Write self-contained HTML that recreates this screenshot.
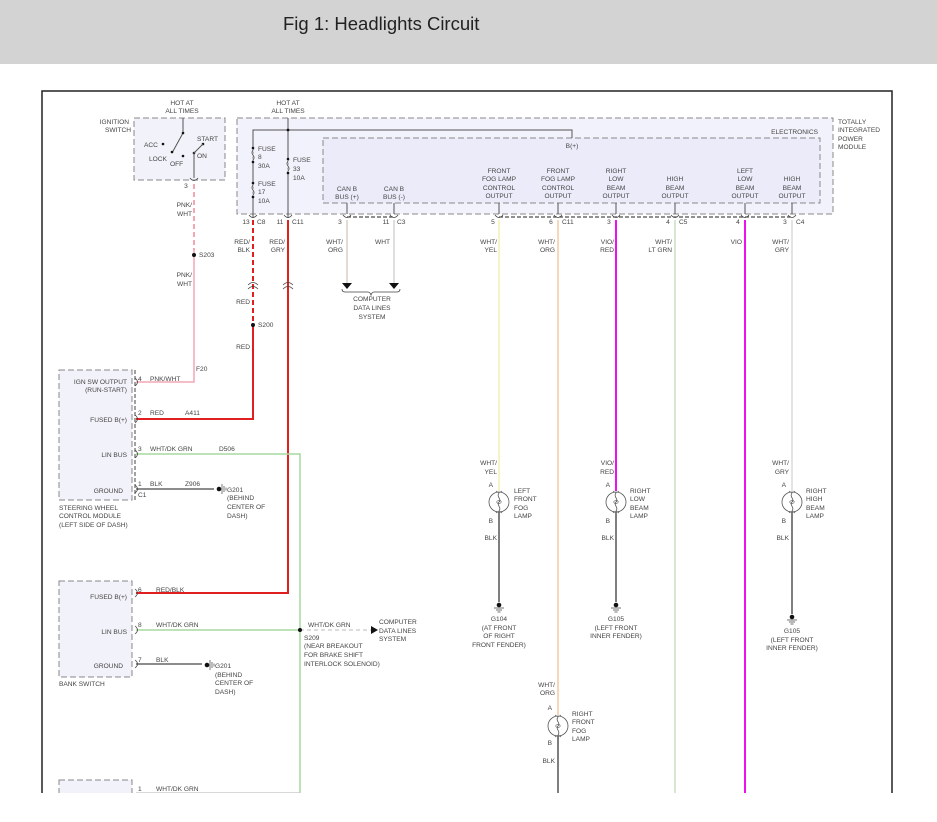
<!DOCTYPE html>
<html><head><meta charset="utf-8"><style>
html,body{margin:0;padding:0;background:#fff;width:937px;height:822px;overflow:hidden}
.hdr{position:absolute;left:0;top:0;width:937px;height:64px;background:#d3d3d3}
.hdr span{position:absolute;left:283px;top:13px;font:18.5px "Liberation Sans",sans-serif;color:#222}
svg{position:absolute;left:0;top:0}
text{font-family:"Liberation Sans",sans-serif;font-size:6.6px;fill:#444}
.m{text-anchor:middle}.e{text-anchor:end}
</style></head><body>
<div class="hdr"><span>Fig 1: Headlights Circuit</span></div>
<svg width="937" height="822" viewBox="0 0 937 822">
<defs>
<clipPath id="c"><rect x="0" y="0" width="937" height="793"/></clipPath>
<g id="lamp"><circle r="10" fill="none" stroke="#555" stroke-width="0.8"/><path d="M-3,-11 Q0,-8 3,-11 M-3,11 Q0,8 3,11 M0,-9 C-3,-5 3,-3 0,0 C-3,3 3,5 0,9" fill="none" stroke="#555" stroke-width="0.8"/><ellipse cx="0" cy="0" rx="2.2" ry="1.4" fill="none" stroke="#555" stroke-width="0.6"/></g>
<g id="gnd"><circle r="2.3" fill="#111"/><path d="M-5,3 H5 M-3,5 H3 M-1.5,7 H1.5" stroke="#444" stroke-width="0.7"/></g>
<g id="gndh"><circle r="2.3" fill="#111"/><path d="M3,-5 V5 M5,-3 V3 M7,-1.5 V1.5" stroke="#444" stroke-width="0.7"/></g>
<path id="conn" d="M-4,-2 Q0,3 4,-2" fill="none" stroke="#444" stroke-width="0.8"/>
</defs>
<g clip-path="url(#c)">
<rect x="42" y="91" width="850" height="740" fill="none" stroke="#222" stroke-width="1.5"/>
<rect x="134" y="118" width="91" height="62" fill="#f2f2fa" stroke="#888" stroke-dasharray="6,3"/>
<text x="129" y="124" class="e">IGNITION</text><text x="131" y="132" class="e">SWITCH</text>
<text x="182" y="105" class="m">HOT AT</text><text x="182" y="113" class="m">ALL TIMES</text>
<path d="M183,118 V133 L172,153" stroke="#555" fill="none"/>
<circle cx="183" cy="133" r="1.3" fill="#111"/><circle cx="172" cy="152" r="1.3" fill="#111"/><circle cx="163" cy="144" r="1.3" fill="#111"/><circle cx="183" cy="156" r="1.3" fill="#111"/><circle cx="203" cy="144" r="1.3" fill="#111"/><circle cx="194" cy="153" r="1.3" fill="#111"/>
<path d="M203,144 L194,153 V178" stroke="#555" fill="none"/>
<text x="144" y="147">ACC</text><text x="149" y="161">LOCK</text><text x="170" y="166">OFF</text><text x="197" y="141">START</text><text x="197" y="158">ON</text>
<use href="#conn" x="194" y="180"/><text x="186" y="188" class="m">3</text>
<rect x="237" y="118" width="596" height="96" fill="#f2f2fc" stroke="#888" stroke-dasharray="6,3"/>
<rect x="323" y="138" width="497" height="65" fill="#ebebfa" stroke="#888" stroke-dasharray="6,3"/>
<text x="288" y="105" class="m">HOT AT</text><text x="288" y="113" class="m">ALL TIMES</text>
<text x="838" y="124">TOTALLY</text><text x="838" y="132">INTEGRATED</text><text x="838" y="141">POWER</text><text x="838" y="149">MODULE</text>
<text x="818" y="134" class="e">ELECTRONICS</text><text x="572" y="148" class="m">B(+)</text>
<path d="M253,218 V130 H572 V138 M288,118 V218" stroke="#555" fill="none"/>
<circle cx="288" cy="130" r="1.4" fill="#111"/>
<g fill="#111"><circle cx="253" cy="148" r="1.3"/><circle cx="253" cy="162" r="1.3"/><circle cx="253" cy="183" r="1.3"/><circle cx="253" cy="197" r="1.3"/><circle cx="288" cy="159" r="1.3"/><circle cx="288" cy="173" r="1.3"/></g>
<path d="M253,150 q-2,3 0,5 q2,3 0,5 M253,185 q-2,3 0,5 q2,3 0,5 M288,161 q-2,3 0,5 q2,3 0,5" stroke="#fff" stroke-width="2" fill="none"/>
<path d="M253,150 q-2,3 0,5 q2,3 0,5 M253,185 q-2,3 0,5 q2,3 0,5 M288,161 q-2,3 0,5 q2,3 0,5" stroke="#555" fill="none"/>
<text x="258" y="151">FUSE</text><text x="258" y="159">8</text><text x="258" y="168">30A</text>
<text x="258" y="186">FUSE</text><text x="258" y="194">17</text><text x="258" y="203">10A</text>
<text x="293" y="162">FUSE</text><text x="293" y="171">33</text><text x="293" y="180">10A</text>
<text x="347" y="191" class="m">CAN B</text><text x="347" y="199" class="m">BUS (+)</text>
<text x="394" y="191" class="m">CAN B</text><text x="394" y="199" class="m">BUS (-)</text>
<text x="499" y="173" class="m">FRONT</text><text x="499" y="181" class="m">FOG LAMP</text><text x="499" y="190" class="m">CONTROL</text><text x="499" y="198" class="m">OUTPUT</text>
<text x="558" y="173" class="m">FRONT</text><text x="558" y="181" class="m">FOG LAMP</text><text x="558" y="190" class="m">CONTROL</text><text x="558" y="198" class="m">OUTPUT</text>
<text x="616" y="173" class="m">RIGHT</text><text x="616" y="181" class="m">LOW</text><text x="616" y="190" class="m">BEAM</text><text x="616" y="198" class="m">OUTPUT</text>
<text x="675" y="181" class="m">HIGH</text><text x="675" y="190" class="m">BEAM</text><text x="675" y="198" class="m">OUTPUT</text>
<text x="745" y="173" class="m">LEFT</text><text x="745" y="181" class="m">LOW</text><text x="745" y="190" class="m">BEAM</text><text x="745" y="198" class="m">OUTPUT</text>
<text x="792" y="181" class="m">HIGH</text><text x="792" y="190" class="m">BEAM</text><text x="792" y="198" class="m">OUTPUT</text>
<path d="M347,203 V214 M394,203 V214 M499,203 V214 M558,203 V214 M616,203 V214 M675,203 V214 M745,203 V214 M792,203 V214" stroke="#555"/>
<path d="M347,217 H394 M499,217 H792" stroke="#222" stroke-dasharray="4,2"/>
<g><use href="#conn" x="253" y="217"/><use href="#conn" x="288" y="217"/><use href="#conn" x="347" y="217"/><use href="#conn" x="394" y="217"/><use href="#conn" x="499" y="217"/><use href="#conn" x="558" y="217"/><use href="#conn" x="616" y="217"/><use href="#conn" x="675" y="217"/><use href="#conn" x="745" y="217"/><use href="#conn" x="792" y="217"/></g>
<text x="246" y="224" class="m">13</text><text x="257" y="224">C8</text><text x="280" y="224" class="m">11</text><text x="292" y="224">C11</text>
<text x="340" y="224" class="m">3</text><text x="386" y="224" class="m">11</text><text x="397" y="224">C3</text>
<text x="493" y="224" class="m">5</text><text x="551" y="224" class="m">6</text><text x="562" y="224">C11</text><text x="609" y="224" class="m">3</text>
<text x="668" y="224" class="m">4</text><text x="679" y="224">C5</text><text x="738" y="224" class="m">4</text><text x="785" y="224" class="m">3</text><text x="796" y="224">C4</text>
<path d="M194,184 V250" stroke="#f4a6b6" stroke-width="2" stroke-dasharray="5,3" fill="none"/>
<path d="M194,250 V382 H136" stroke="#f4a6b6" stroke-width="1.5" fill="none"/>
<circle cx="194" cy="255" r="2" fill="#111"/><text x="199" y="257">S203</text>
<text x="192" y="207" class="e">PNK/</text><text x="192" y="216" class="e">WHT</text>
<text x="192" y="277" class="e">PNK/</text><text x="192" y="286" class="e">WHT</text>
<path d="M253,220 V418" stroke="#e02020" stroke-width="2" stroke-dasharray="5,3" fill="none"/>
<path d="M253,325 V419 H136" stroke="#e02020" stroke-width="2" fill="none"/>
<path d="M288,220 V593 H136" stroke="#e02020" stroke-width="2" fill="none"/>
<path d="M248,285 q5,-5 10,0 M248,289 q5,-5 10,0 M283,285 q5,-5 10,0 M283,289 q5,-5 10,0" stroke="#444" stroke-width="0.8" fill="none"/>
<circle cx="253" cy="325" r="2" fill="#111"/><text x="258" y="327">S200</text>
<text x="250" y="244" class="e">RED/</text><text x="250" y="252" class="e">BLK</text>
<text x="285" y="244" class="e">RED/</text><text x="285" y="252" class="e">GRY</text>
<text x="250" y="304" class="e">RED</text><text x="250" y="349" class="e">RED</text>
<path d="M136,454 H300 V793 M136,630 H300" stroke="#a8d8a0" stroke-width="1.5" fill="none"/>
<path d="M300,630 H372" stroke="#bbb" stroke-dasharray="4,3"/>
<path d="M371,626 L378,630 L371,634 Z" fill="#111"/>
<circle cx="300" cy="630" r="2" fill="#111"/>
<path d="M136,489 H214 M136,664 H202" stroke="#666" stroke-width="1.5"/>
<use href="#gndh" x="219" y="489"/><use href="#gndh" x="207" y="665"/>
<path d="M347,220 V286" stroke="#d8cfc4" stroke-width="1.5"/><path d="M394,220 V286" stroke="#d4d4d4" stroke-width="1.5"/>
<path d="M342,283 h10 l-5,6 z M389,283 h10 l-5,6 z" fill="#111"/>
<path d="M342,289 q0,3 3,3 h23 q2,0 3,3 q1,-3 3,-3 h23 q3,0 3,-3" stroke="#444" stroke-width="0.8" fill="none"/>
<text x="372" y="301" class="m">COMPUTER</text><text x="372" y="310" class="m">DATA LINES</text><text x="372" y="319" class="m">SYSTEM</text>
<text x="343" y="244" class="e">WHT/</text><text x="343" y="252" class="e">ORG</text><text x="390" y="244" class="e">WHT</text>
<path d="M499,220 V491" stroke="#f3f0b0" stroke-width="1.5"/>
<path d="M558,220 V715" stroke="#f3caa0" stroke-width="1.5"/>
<path d="M616,220 V491" stroke="#ee11ee" stroke-width="2"/>
<path d="M675,220 V793" stroke="#c8e2c0" stroke-width="1.5"/>
<path d="M745,220 V793" stroke="#ee11ee" stroke-width="2"/>
<path d="M792,220 V491" stroke="#dcdcdc" stroke-width="1.5"/>
<text x="497" y="244" class="e">WHT/</text><text x="497" y="252" class="e">YEL</text>
<text x="555" y="244" class="e">WHT/</text><text x="555" y="252" class="e">ORG</text>
<text x="614" y="244" class="e">VIO/</text><text x="614" y="252" class="e">RED</text>
<text x="672" y="244" class="e">WHT/</text><text x="672" y="252" class="e">LT GRN</text>
<text x="742" y="244" class="e">VIO</text>
<text x="789" y="244" class="e">WHT/</text><text x="789" y="252" class="e">GRY</text>
<path d="M499,512 V602 M616,512 V602 M792,512 V614 M558,736 V793" stroke="#555" stroke-width="1.5"/>
<use href="#lamp" x="499" y="502"/><use href="#lamp" x="616" y="502"/><use href="#lamp" x="792" y="502"/><use href="#lamp" x="558" y="726"/>
<use href="#gnd" x="499" y="605"/><use href="#gnd" x="616" y="605"/><use href="#gnd" x="792" y="617"/>
<text x="497" y="465" class="e">WHT/</text><text x="497" y="474" class="e">YEL</text><text x="493" y="487" class="e">A</text><text x="493" y="523" class="e">B</text><text x="497" y="540" class="e">BLK</text>
<text x="514" y="493">LEFT</text><text x="514" y="501">FRONT</text><text x="514" y="510">FOG</text><text x="514" y="518">LAMP</text>
<text x="499" y="621" class="m">G104</text><text x="499" y="630" class="m">(AT FRONT</text><text x="499" y="638" class="m">OF RIGHT</text><text x="499" y="647" class="m">FRONT FENDER)</text>
<text x="614" y="465" class="e">VIO/</text><text x="614" y="474" class="e">RED</text><text x="610" y="487" class="e">A</text><text x="610" y="523" class="e">B</text><text x="614" y="540" class="e">BLK</text>
<text x="630" y="493">RIGHT</text><text x="630" y="501">LOW</text><text x="630" y="510">BEAM</text><text x="630" y="518">LAMP</text>
<text x="616" y="621" class="m">G105</text><text x="616" y="630" class="m">(LEFT FRONT</text><text x="616" y="638" class="m">INNER FENDER)</text>
<text x="789" y="465" class="e">WHT/</text><text x="789" y="474" class="e">GRY</text><text x="786" y="487" class="e">A</text><text x="786" y="523" class="e">B</text><text x="789" y="540" class="e">BLK</text>
<text x="806" y="493">RIGHT</text><text x="806" y="501">HIGH</text><text x="806" y="510">BEAM</text><text x="806" y="518">LAMP</text>
<text x="792" y="633" class="m">G105</text><text x="792" y="642" class="m">(LEFT FRONT</text><text x="792" y="650" class="m">INNER FENDER)</text>
<text x="555" y="687" class="e">WHT/</text><text x="555" y="695" class="e">ORG</text><text x="552" y="710" class="e">A</text><text x="552" y="745" class="e">B</text><text x="555" y="763" class="e">BLK</text>
<text x="572" y="716">RIGHT</text><text x="572" y="724">FRONT</text><text x="572" y="733">FOG</text><text x="572" y="741">LAMP</text>
<rect x="59" y="370" width="73" height="130" fill="#f2f2fa" stroke="#888" stroke-dasharray="6,3"/>
<path d="M135,370 V500" stroke="#444" stroke-dasharray="4,2"/>
<text x="127" y="384" class="e">IGN SW OUTPUT</text><text x="127" y="392" class="e">(RUN-START)</text>
<text x="127" y="422" class="e">FUSED B(+)</text><text x="127" y="457" class="e">LIN BUS</text><text x="123" y="493" class="e">GROUND</text>
<text x="59" y="510">STEERING WHEEL</text><text x="59" y="518">CONTROL MODULE</text><text x="59" y="527">(LEFT SIDE OF DASH)</text>
<text x="138" y="381">4</text><text x="150" y="381">PNK/WHT</text><text x="196" y="371">F20</text>
<text x="138" y="415">2</text><text x="150" y="415">RED</text><text x="185" y="415">A411</text>
<text x="138" y="451">3</text><text x="150" y="451">WHT/DK GRN</text><text x="219" y="451">D506</text>
<text x="138" y="486">1</text><text x="150" y="486">BLK</text><text x="185" y="486">Z906</text><text x="138" y="497">C1</text>
<text x="227" y="492">G201</text><text x="227" y="500">(BEHIND</text><text x="227" y="509">CENTER OF</text><text x="227" y="518">DASH)</text>
<rect x="59" y="581" width="73" height="96" fill="#f2f2fa" stroke="#888" stroke-dasharray="6,3"/>
<text x="127" y="599" class="e">FUSED B(+)</text><text x="127" y="634" class="e">LIN BUS</text><text x="123" y="668" class="e">GROUND</text>
<text x="59" y="686">BANK SWITCH</text>
<text x="138" y="592">6</text><text x="156" y="592">RED/BLK</text>
<text x="138" y="627">8</text><text x="156" y="627">WHT/DK GRN</text>
<text x="138" y="662">7</text><text x="156" y="662">BLK</text>
<text x="215" y="668">G201</text><text x="215" y="677">(BEHIND</text><text x="215" y="685">CENTER OF</text><text x="215" y="694">DASH)</text>
<text x="308" y="627">WHT/DK GRN</text>
<text x="304" y="640">S209</text><text x="304" y="648">(NEAR BREAKOUT</text><text x="304" y="657">FOR BRAKE SHIFT</text><text x="304" y="666">INTERLOCK SOLENOID)</text>
<text x="379" y="624">COMPUTER</text><text x="379" y="633">DATA LINES</text><text x="379" y="641">SYSTEM</text>
<rect x="59" y="780" width="73" height="60" fill="#f2f2fa" stroke="#888" stroke-dasharray="6,3"/>
<text x="138" y="791">1</text><text x="156" y="791">WHT/DK GRN</text>
<path d="M136,793 H300" stroke="#ccc" stroke-width="1.5"/>
<g><use href="#conn" x="137" y="382" transform="rotate(-90 137 382)"/><use href="#conn" x="137" y="419" transform="rotate(-90 137 419)"/><use href="#conn" x="137" y="454" transform="rotate(-90 137 454)"/><use href="#conn" x="137" y="489" transform="rotate(-90 137 489)"/><use href="#conn" x="137" y="593" transform="rotate(-90 137 593)"/><use href="#conn" x="137" y="630" transform="rotate(-90 137 630)"/><use href="#conn" x="137" y="664" transform="rotate(-90 137 664)"/></g>
</g>
</svg>
</body></html>
